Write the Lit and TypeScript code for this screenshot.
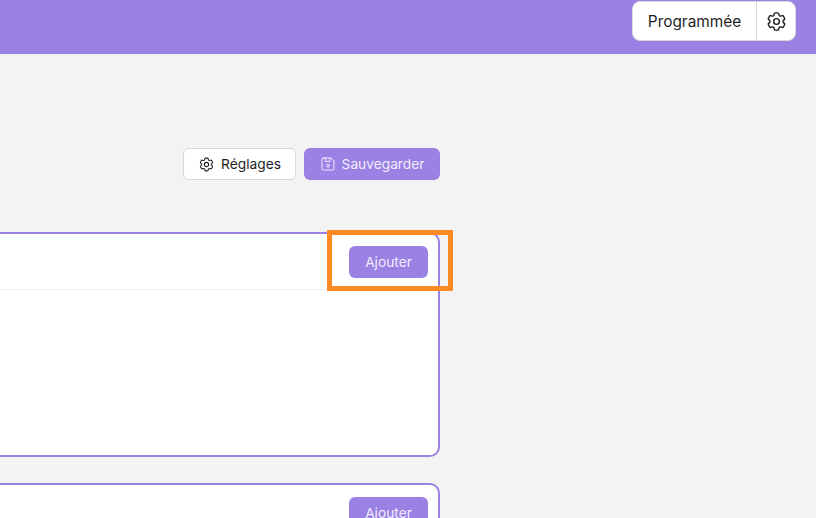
import { LitElement, html, css, svg } from "lit";
import { customElement } from "lit/decorators.js";

const gear = svg`<path d="M9.594 3.94c.09-.542.56-.94 1.11-.94h2.593c.55 0 1.02.398 1.11.94l.213 1.281c.063.374.313.686.645.87.074.04.147.083.22.127.325.196.72.257 1.075.124l1.217-.456a1.125 1.125 0 0 1 1.37.49l1.296 2.247a1.125 1.125 0 0 1-.26 1.431l-1.003.827c-.293.241-.438.613-.43.992a7.723 7.723 0 0 1 0 .255c-.008.378.137.75.43.991l1.004.827c.424.35.534.955.26 1.43l-1.298 2.247a1.125 1.125 0 0 1-1.369.491l-1.217-.456c-.355-.133-.75-.072-1.076.124a6.47 6.47 0 0 1-.22.128c-.331.183-.581.495-.644.869l-.213 1.281c-.09.543-.56.94-1.11.94h-2.594c-.55 0-1.019-.398-1.11-.94l-.213-1.281c-.062-.374-.312-.686-.644-.87a6.52 6.52 0 0 1-.22-.127c-.325-.196-.72-.257-1.076-.124l-1.217.456a1.125 1.125 0 0 1-1.369-.49l-1.297-2.247a1.125 1.125 0 0 1 .26-1.431l1.004-.827c.292-.24.437-.613.43-.991a6.932 6.932 0 0 1 0-.255c.007-.38-.138-.751-.43-.992l-1.004-.827a1.125 1.125 0 0 1-.26-1.43l1.297-2.247a1.125 1.125 0 0 1 1.37-.491l1.216.456c.356.133.751.072 1.076-.124.072-.044.146-.086.22-.128.332-.183.582-.495.644-.869l.214-1.28Z"/><path d="M15 12a3 3 0 1 1-6 0 3 3 0 0 1 6 0Z"/>`;

const save = svg`<path d="M5 3h11.5L21 7.5V19a2 2 0 0 1-2 2H5a2 2 0 0 1-2-2V5a2 2 0 0 1 2-2Z"/><path d="M8 3v5h7V3"/><circle cx="12" cy="14.5" r="2.2"/>`;

@customElement("app-root")
export class AppRoot extends LitElement {
  static styles = css`
    :host {
      display: block;
      position: relative;
      width: 816px;
      height: 518px;
      overflow: hidden;
      background: #f3f3f3;
      font-family: Inter, "Liberation Sans", sans-serif;
    }
    .topbar {
      height: 54px;
      box-sizing: border-box;
      background: #9b81e3;
      display: flex;
      justify-content: flex-end;
      padding: 1px 20px 0 0;
    }
    .mode {
      height: 40px;
      box-sizing: border-box;
      display: flex;
      background: #fff;
      border: 1px solid #d9d9d9;
      border-radius: 8px;
    }
    .mode-label {
      box-sizing: border-box;
      width: 124px;
      display: flex;
      align-items: center;
      justify-content: center;
      font-size: 15.4px;
      color: #1f1f1f;
      border-right: 1px solid #d9d9d9;
    }
    .mode-icon {
      width: 38px;
      display: flex;
      align-items: center;
      justify-content: center;
      color: #1f1f1f;
    }
    .icon {
      fill: none;
      stroke: currentColor;
      stroke-width: 1.5;
      stroke-linecap: round;
      stroke-linejoin: round;
      display: block;
    }
    .main {
      width: 440px;
      box-sizing: border-box;
      overflow: hidden;
      padding-top: 94px;
    }
    .actions {
      display: flex;
      justify-content: flex-end;
      gap: 8px;
      height: 32px;
    }
    .btn {
      box-sizing: border-box;
      height: 32px;
      display: flex;
      align-items: center;
      gap: 6px;
      border-radius: 6px;
      font-size: 13.75px;
    }
    .settings {
      width: 113px;
      justify-content: center;
      background: #fff;
      border: 1px solid #d9d9d9;
      color: #1f1f1f;
    }
    .savebtn {
      width: 136px;
      justify-content: center;
      background: #9b81e3;
      color: #f1ecfd;
    }
    .card {
      margin: 0 0 26px -12px;
      box-sizing: border-box;
      height: 225px;
      background: #fff;
      border: 2px solid #9b81e3;
      border-radius: 10px;
    }
    .cards {
      padding-top: 52px;
    }
    .card-head {
      box-sizing: border-box;
      height: 56px;
      display: flex;
      justify-content: flex-end;
      align-items: center;
      padding: 0 10px 0 0;
      border-bottom: 1px solid #ececec;
    }
    .add {
      box-sizing: border-box;
      width: 79px;
      height: 32px;
      display: flex;
      align-items: center;
      justify-content: center;
      background: #9b81e3;
      color: #f1ecfd;
      border-radius: 6px;
      font-size: 13.75px;
    }
    .highlight {
      position: absolute;
      left: 327px;
      top: 230px;
      width: 126px;
      height: 61px;
      box-sizing: border-box;
      border: 5px solid #ff8a24;
      pointer-events: none;
    }
  `;

  private card() {
    return html`<div class="card">
      <div class="card-head"><div class="add">Ajouter</div></div>
    </div>`;
  }

  render() {
    return html`
      <div class="topbar">
        <div class="mode">
          <div class="mode-label">Programmée</div>
          <div class="mode-icon">
            <svg class="icon" width="23" height="23" viewBox="0 0 24 24">${gear}</svg>
          </div>
        </div>
      </div>
      <div class="main">
        <div class="actions">
          <div class="btn settings">
            <svg class="icon" width="17" height="17" viewBox="0 0 24 24">${gear}</svg>
            Réglages
          </div>
          <div class="btn savebtn">
            <svg class="icon" width="16" height="16" viewBox="0 0 24 24">${save}</svg>
            Sauvegarder
          </div>
        </div>
        <div class="cards">${this.card()}${this.card()}</div>
      </div>
      <div class="highlight"></div>
    `;
  }
}
